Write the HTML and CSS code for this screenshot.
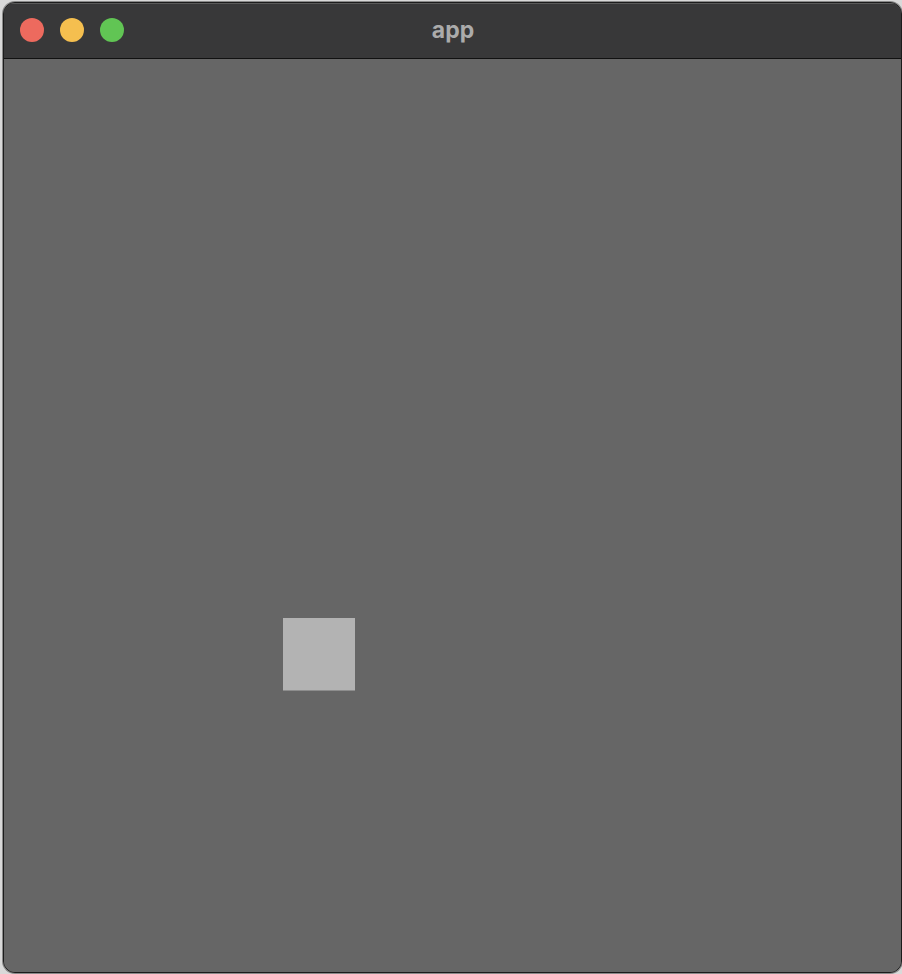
FILE: index.html
```html
<!DOCTYPE html>
<html>
<head>
<meta charset="utf-8">
<title>app</title>
<link rel="stylesheet" href="styles.css">
</head>
<body>
<div class="window">
  <div class="titlebar">
    <div class="lights">
      <span class="light red"></span>
      <span class="light yellow"></span>
      <span class="light green"></span>
    </div>
    <div class="title">app</div>
  </div>
  <div class="content">
    <div class="square"></div>
  </div>
</div>
</body>
</html>
```
FILE: styles.css
```css
html, body {
  margin: 0;
  padding: 0;
  width: 902px;
  height: 974px;
  overflow: hidden;
  background: #d9d9d9;
  font-family: "Inter", "Liberation Sans", sans-serif;
}
.window {
  margin: 2px 0 0 3px;
  width: 897px;
  height: 969px;
  border: 1px solid #1c1c1c;
  border-radius: 12px;
  overflow: hidden;
  background: #666666;
  box-shadow: 0 0 0 1px #8a8a8a;
  display: flex;
  flex-direction: column;
}
.titlebar {
  box-sizing: border-box;
  height: 56px;
  padding-bottom: 2px;
  background: #383839;
  border-bottom: 1px solid #111;
  display: flex;
  align-items: center;
  position: relative;
  box-shadow: inset 0 1px 0 #5a5a5a;
}
.lights {
  display: flex;
  gap: 16px;
  padding-left: 16px;
}
.light {
  width: 24px;
  height: 24px;
  border-radius: 50%;
  display: block;
}
.red { background: #ed6a5e; }
.yellow { background: #f5bf4f; }
.green { background: #61c554; }
.title {
  position: absolute;
  left: 0;
  right: 0;
  top: 0;
  bottom: 2px;
  display: flex;
  align-items: center;
  justify-content: center;
  color: #ababab;
  font-weight: 700;
  font-size: 23px;
  padding-left: 1px;
}
.content {
  flex: 1;
  background: #666666;
  padding: 559px 0 0 279px;
}
.square {
  width: 72px;
  height: 72px;
  background: #b3b3b3;
  border-bottom: 1px solid #8d8d8d;
}
```
